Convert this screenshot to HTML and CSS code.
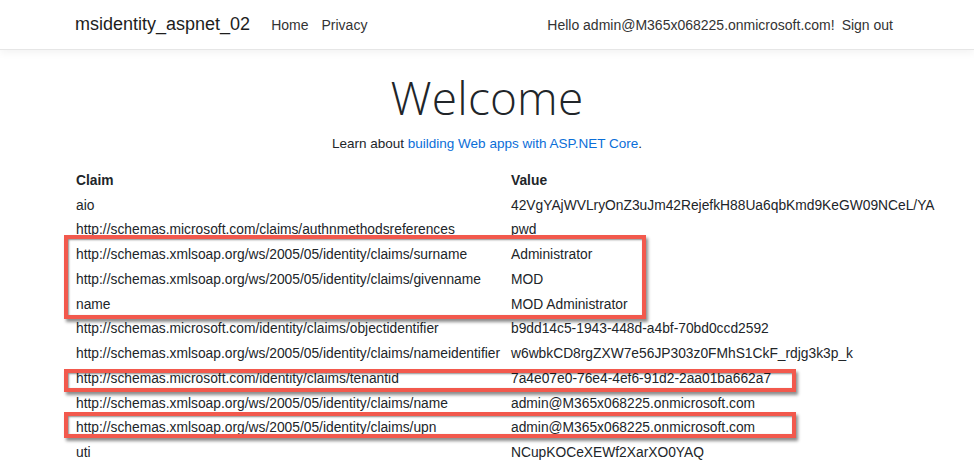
FILE: index.html
```html
<!DOCTYPE html>
<html>
<head>
<meta charset="utf-8">
<title>msidentity_aspnet_02</title>
<link rel="stylesheet" href="styles.css">
</head>
<body>
<header class="navbar">
  <a class="brand">msidentity_aspnet_02</a>
  <nav class="nav-left">
    <a class="nav-link">Home</a>
    <a class="nav-link">Privacy</a>
  </nav>
  <div class="nav-right">
    <span class="nav-link">Hello admin@M365x068225.onmicrosoft.com!</span>
    <a class="nav-link">Sign out</a>
  </div>
</header>
<main class="main">
  <div class="hero">
    <h1 class="display">Welcome</h1>
    <p class="lead">Learn about <a class="link">building Web apps with ASP.NET Core</a>.</p>
  </div>
  <div class="claims">
    <div class="th">Claim</div><div class="th">Value</div>
    <div>aio</div><div>42VgYAjWVLryOnZ3uJm42RejefkH88Ua6qbKmd9KeGW09NCeL/YA</div>
    <div>http://schemas.microsoft.com/claims/authnmethodsreferences</div><div>pwd</div>
    <div>http://schemas.xmlsoap.org/ws/2005/05/identity/claims/surname</div><div>Administrator</div>
    <div>http://schemas.xmlsoap.org/ws/2005/05/identity/claims/givenname</div><div>MOD</div>
    <div>name</div><div>MOD Administrator</div>
    <div>http://schemas.microsoft.com/identity/claims/objectidentifier</div><div>b9dd14c5-1943-448d-a4bf-70bd0ccd2592</div>
    <div>http://schemas.xmlsoap.org/ws/2005/05/identity/claims/nameidentifier</div><div>w6wbkCD8rgZXW7e56JP303z0FMhS1CkF_rdjg3k3p_k</div>
    <div>http://schemas.microsoft.com/identity/claims/tenantid</div><div>7a4e07e0-76e4-4ef6-91d2-2aa01ba662a7</div>
    <div>http://schemas.xmlsoap.org/ws/2005/05/identity/claims/name</div><div>admin@M365x068225.onmicrosoft.com</div>
    <div>http://schemas.xmlsoap.org/ws/2005/05/identity/claims/upn</div><div>admin@M365x068225.onmicrosoft.com</div>
    <div>uti</div><div>NCupKOCeXEWf2XarXO0YAQ</div>
    <span class="mark mark-1"></span>
    <span class="mark mark-2"></span>
    <span class="mark mark-3"></span>
  </div>
</main>
</body>
</html>
```
FILE: styles.css
```css
html, body {
  margin: 0;
  padding: 0;
  background: #fff;
  font-family: "Liberation Sans", Arial, sans-serif;
  color: #212529;
  overflow: hidden;
}

.navbar {
  height: 49px;
  border-bottom: 1px solid #e6e6e6;
  box-shadow: 0 3px 8px rgba(0, 0, 0, 0.05);
  display: flex;
  align-items: center;
  padding: 0 81px 0 75px;
  box-sizing: content-box;
}

.brand {
  font-size: 18px;
  color: #1d1d1d;
  margin-right: 21px;
}

.nav-left {
  display: flex;
  gap: 13px;
}

.nav-right {
  margin-left: auto;
  display: flex;
  gap: 7px;
}

.nav-link {
  font-size: 14px;
  color: #333;
}

.main {
  padding: 0 0 0 76px;
}

.hero {
  text-align: center;
  margin-left: -76px;
}

.display {
  font-family: "Open Sans", "Liberation Sans", sans-serif;
  font-weight: 300;
  font-size: 46px;
  line-height: 52px;
  margin: 21px 0 0;
  letter-spacing: 0.2px;
}

.lead {
  font-size: 13.5px;
  margin: 11px 0 0;
  line-height: 20px;
}

.link {
  color: #0a6ed8;
}

.claims {
  position: relative;
  display: grid;
  grid-template-columns: 435px auto;
  grid-auto-rows: 24.75px;
  align-items: center;
  font-size: 13.8px;
  margin-top: 14px;
  white-space: nowrap;
}

.th {
  font-weight: bold;
}

.mark {
  position: absolute;
  left: -12px;
  border: 4px solid #f2594d;
  box-shadow: 2px 3px 3px rgba(0, 0, 0, 0.45), inset 1px 1px 2px rgba(0, 0, 0, 0.45);
  box-sizing: border-box;
}

.mark-1 {
  top: 67px;
  width: 582px;
  height: 84px;
}

.mark-2 {
  top: 201px;
  width: 732px;
  height: 23px;
}

.mark-3 {
  top: 244px;
  width: 732px;
  height: 26px;
}
```
